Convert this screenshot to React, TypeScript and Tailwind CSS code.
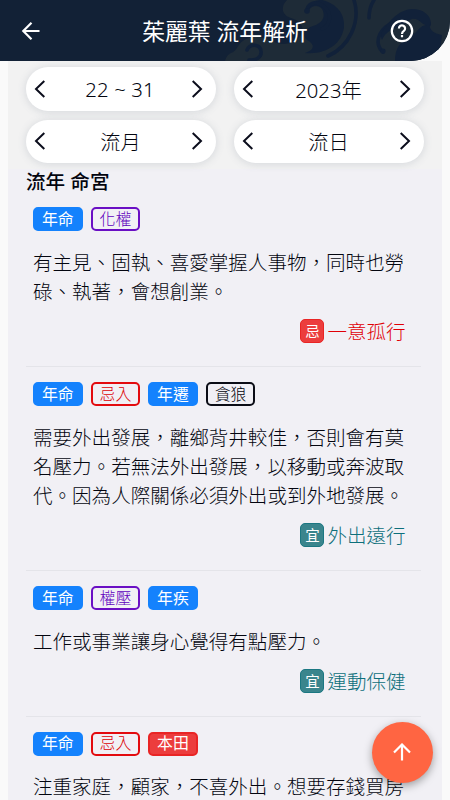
import React from 'react';

type Tone = 'blue' | 'red' | 'purpleOutline' | 'redOutline' | 'blackOutline';

interface Tag {
  label: string;
  tone: Tone;
}

interface Reading {
  tags: Tag[];
  lines: string[];
  verdict?: { kind: '忌' | '宜'; text: string };
}

const TONES: Record<Tone, string> = {
  blue: 'bg-[#1482fd] border-[#1482fd] text-white font-normal',
  red: 'bg-[#ec3d3d] border-[#e92525] text-white font-normal',
  purpleOutline: 'border-[#6a0fc4] text-[#5f00bd]',
  redOutline: 'border-[#e30b0f] text-[#dc0004]',
  blackOutline: 'border-[#0b0d16] text-[#03040c]'
};

const READINGS: Reading[] = [
  {
    tags: [{ label: '年命', tone: 'blue' }, { label: '化權', tone: 'purpleOutline' }],
    lines: ['有主見、固執、喜愛掌握人事物，同時也勞', '碌、執著，會想創業。'],
    verdict: { kind: '忌', text: '一意孤行' }
  },
  {
    tags: [
      { label: '年命', tone: 'blue' },
      { label: '忌入', tone: 'redOutline' },
      { label: '年遷', tone: 'blue' },
      { label: '貪狼', tone: 'blackOutline' }
    ],
    lines: ['需要外出發展，離鄉背井較佳，否則會有莫', '名壓力。若無法外出發展，以移動或奔波取', '代。因為人際關係必須外出或到外地發展。'],
    verdict: { kind: '宜', text: '外出遠行' }
  },
  {
    tags: [{ label: '年命', tone: 'blue' }, { label: '權壓', tone: 'purpleOutline' }, { label: '年疾', tone: 'blue' }],
    lines: ['工作或事業讓身心覺得有點壓力。'],
    verdict: { kind: '宜', text: '運動保健' }
  },
  {
    tags: [{ label: '年命', tone: 'blue' }, { label: '忌入', tone: 'redOutline' }, { label: '本田', tone: 'red' }],
    lines: ['注重家庭，顧家，不喜外出。想要存錢買房']
  }
];

function Chevron({ flip = false }: { flip?: boolean }) {
  return (
    <svg viewBox="0 0 12 20" className={`w-3 h-5 flex-shrink-0 ${flip ? 'rotate-180' : ''}`} fill="none" stroke="#0b0d1c" strokeWidth="2">
      <path d="M10.3 2 2 10l8.3 8" />
    </svg>
  );
}

function Stepper({ label, className = 'pt-0.5' }: { label: string; className?: string }) {
  return (
    <div className="h-[43.5px] rounded-full bg-white shadow-[0_1px_8px_rgba(90,105,125,0.2)] flex items-center justify-between pl-2 pr-[13px]">
      <Chevron />
      <span className={`pl-1 text-[20.3px] leading-none ${className}`}>{label}</span>
      <Chevron flip />
    </div>
  );
}

function Waves() {
  return (
    <svg className="absolute right-0 top-0 w-[225px] h-[61px]" viewBox="0 0 225 61" fill="none">
      <path d="M62 0C55 7 57 15 66 18C76 21 80 28 76 35C72 42 62 46 52 43C42 39 32 34 21 39C12 43 13 51 6 53C2 55 1 58 0 61H225V0Z" fill="#1e2b37" />
      <path d="M97 0C113 4 120 15 119 27C117 44 101 55 80 53C89 50 91 45 82 40C76 34 81 28 88 26C98 23 101 16 97 9C94 5 87 5 84 10V5C87 1 92 0 97 0Z" fill="#112139" />
      <g stroke="#112139" strokeWidth="3.6" strokeLinecap="round">
        <path d="M82 11C82 3 91 1 97 5C108 12 106 25 97 29" />
        <path d="M129 0C136 22 124 47 103 56" />
        <path d="M149 0C145 6 144 12 144 18" />
        <path d="M158 52C149 44 153 31 165 24" />
        <path d="M22 50C25 43 35 44 36 51C37 57 31 61 24 60" />
      </g>
      <g fill="#112139">
        <circle cx="82" cy="11" r="2.8" />
        <circle cx="158" cy="51" r="2.6" />
        <circle cx="203" cy="24" r="3" />
        <path d="M160 28C168 16 176 10 187 9C198 9 206 15 206 24C198 29 195 17 187 19C181 21 178 27 169 29C163 31 159 35 157 40C155 36 156 32 160 28Z" />
        <path d="M170 61C170 47 176 41 186 36C194 31 195 24 204 25C206 31 208 33 217 35L214 61Z" />
      </g>
    </svg>
  );
}

function Header() {
  return (
    <header className="relative h-[61px] flex-shrink-0 bg-[#122136] rounded-br-[40px] overflow-hidden">
      <Waves />
      <div className="relative h-full grid grid-cols-[1fr_auto_1fr] items-center pl-[21px] pr-9 text-white">
        <svg viewBox="0 0 20 20" className="w-5 h-5" fill="none" stroke="currentColor" strokeWidth="2.2">
          <path d="M18.5 10H2.5M10.5 1.8 2.3 10l8.2 8.2" />
        </svg>
        <h1 className="pl-[15px] pt-[3px] text-[22.8px] leading-none font-normal">茱麗葉 流年解析</h1>
        <svg viewBox="0 0 24 24" className="w-6 h-6 justify-self-end" fill="none" stroke="currentColor" strokeWidth="2.2">
          <circle cx="12" cy="12" r="10.2" />
          <path d="M8.9 9.4a3.1 3.1 0 1 1 5 2.5c-1.2.9-1.9 1.4-1.9 3" />
          <path d="M12 16v2.3" />
        </svg>
      </div>
    </header>
  );
}

function ReadingItem({ reading }: { reading: Reading }) {
  const { tags, lines, verdict } = reading;
  return (
    <article className="pt-[15px] pl-[7px] border-b border-[#e4e4e9]">
      <div className="flex gap-2">
        {tags.map((tag) => (
          <span key={tag.label} className={`w-[49.6px] h-6 rounded-[5px] border-2 flex items-center justify-center pt-px text-[15.9px] leading-none ${TONES[tag.tone]}`}>
            {tag.label}
          </span>
        ))}
      </div>
      <div className="mt-[16.7px] text-[19.55px] leading-[29.3px] whitespace-nowrap">
        {lines.map((line) => (
          <p key={line}>{line}</p>
        ))}
      </div>
      {verdict && (
        <div className={`mt-[12.8px] mb-[22.7px] mr-[15.5px] h-6 flex items-center justify-end gap-[3px] ${verdict.kind === '忌' ? 'text-[#e00006]' : 'text-[#0d6f7b]'}`}>
          <span className={`w-6 h-6 rounded-[5px] border flex items-center justify-center text-[14.5px] leading-none font-normal text-white ${verdict.kind === '忌' ? 'bg-[#ec3d3d] border-[#e92525]' : 'bg-[#3a858d] border-[#1b7782]'}`}>
            {verdict.kind}
          </span>
          <span className="pt-px text-[19.55px] leading-none">{verdict.text}</span>
        </div>
      )}
    </article>
  );
}

export default function App() {
  return (
    <div className="relative w-[450px] h-[800px] overflow-hidden flex flex-col bg-[#fafafa] text-[#03050f] font-light font-['Noto_Sans','Noto_Sans_CJK_TC',sans-serif]">
      <Header />
      <main className="flex-1 min-h-0 mx-2 overflow-hidden bg-[#f1f0f5]">
        <section className="h-[108px] bg-[#f2f2f2] pt-1.5 px-[18px] grid grid-cols-2 gap-x-[18px] gap-y-[9px] content-start">
          <Stepper label="22 ~ 31" className="pr-px tracking-[0.15px]" />
          <Stepper label="2023年" />
          <Stepper label="流月" />
          <Stepper label="流日" />
        </section>
        <section className="pl-[18px] pr-[21px]">
          <h2 className="h-[23.3px] pt-[3px] flex items-center text-[19.6px] leading-none font-medium">流年 命宮</h2>
          {READINGS.map((reading) => (
            <ReadingItem key={reading.lines[0]} reading={reading} />
          ))}
        </section>
      </main>
      <button className="absolute left-[371.5px] top-[721.5px] w-[61px] h-[61px] rounded-full bg-[#ff6542] shadow-[0_3px_8px_rgba(0,0,0,0.35)] flex items-center justify-center">
        <svg viewBox="0 0 18 18" className="w-[18px] h-[18px]" fill="none" stroke="white" strokeWidth="2.2">
          <path d="M9 17.5V2M1 9.5l8-8 8 8" />
        </svg>
      </button>
    </div>
  );
}
